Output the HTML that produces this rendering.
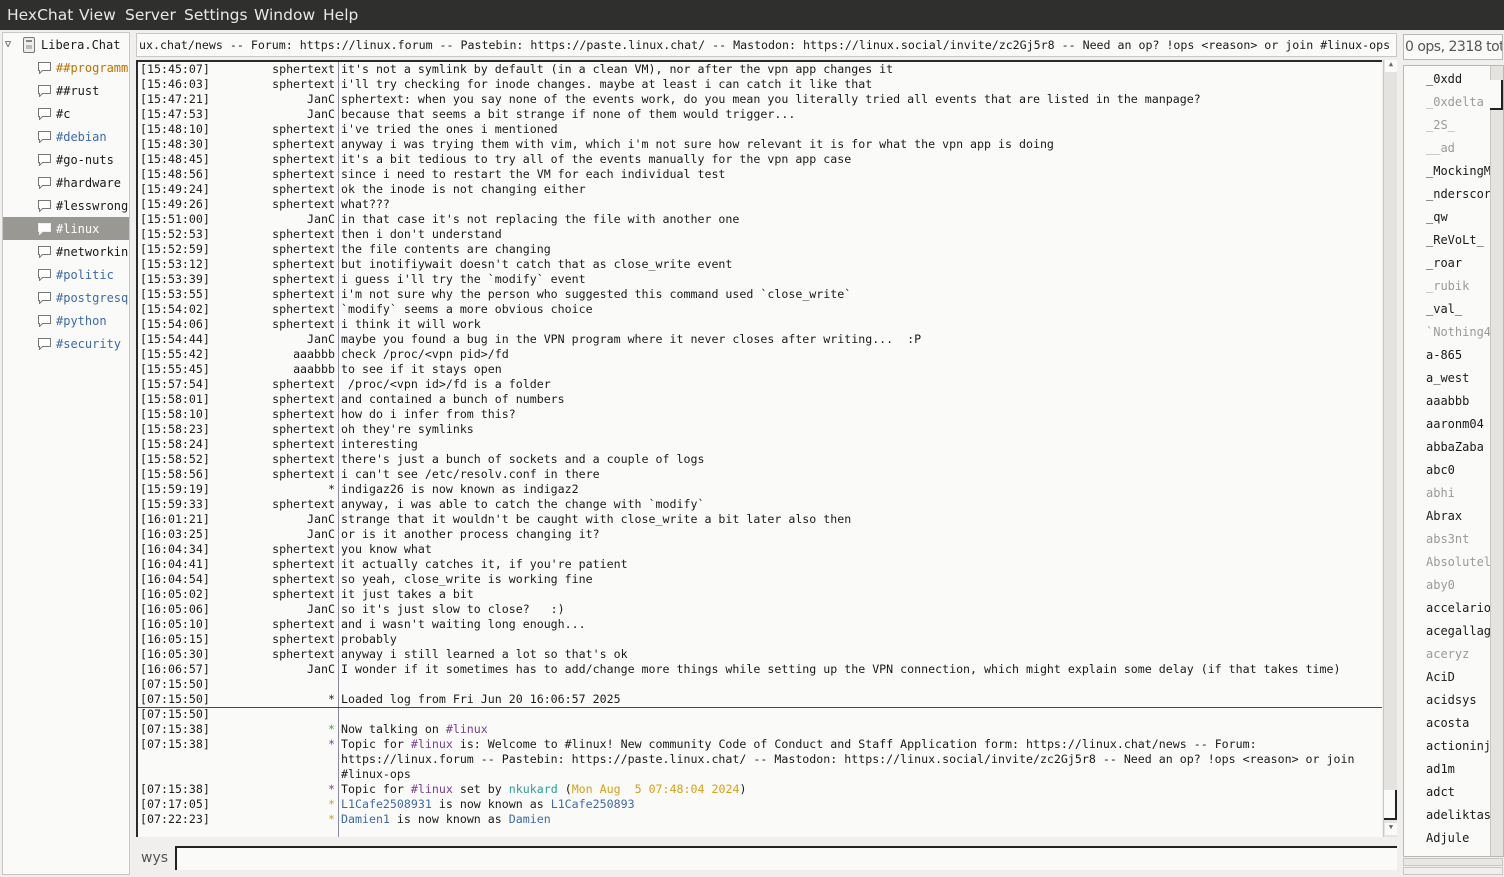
<!DOCTYPE html>
<html><head><meta charset="utf-8"><style>
*{margin:0;padding:0;box-sizing:border-box}
body{width:1504px;height:877px;background:#f0efed;font-family:"DejaVu Sans Mono","Liberation Mono",monospace;position:relative;overflow:hidden;color:#1a1a1a}
.menu{position:absolute;left:0;top:0;width:1504px;height:30px;background:#2f2f2e;color:#e8e8e6;font-family:"DejaVu Sans","Liberation Sans",sans-serif;font-size:15.5px}
.menu span{position:absolute;top:6px}
.tree{position:absolute;left:2px;top:32px;width:128px;height:843px;background:#fafaf8;border:1px solid #c8c7c4;font-size:12px;overflow:hidden}
.tree .it{position:absolute;left:0;width:126px;height:22px;line-height:22px;white-space:nowrap;overflow:hidden}
.ic{position:absolute;left:34px;top:4px;width:15px;height:13px}
.topic{position:absolute;left:136px;top:33px;width:1261px;height:24px;background:#fafaf8;border:1px solid #c8c7c4;font-size:11.62px;line-height:22px;white-space:nowrap;overflow:hidden;padding-left:2px}
.chat{position:absolute;left:136px;top:60px;width:1246px;height:777px;background:#fafaf8;border-left:2px solid #2a2a2a;border-top:2px solid #2a2a2a;overflow:hidden}
.vl{position:absolute;left:200px;top:0;width:1px;height:777px;background:#8b88a6}
.r{position:absolute;left:0;height:15px;line-height:15px;font-size:11.62px;white-space:pre;width:1244px}
.t{position:absolute;left:2px}
.n{position:absolute;right:1047px;text-align:right}
.m{position:absolute;left:203px}
.sep{position:absolute;left:0;top:645px;width:1244px;height:1px;background:#7a3b10}
.sb{position:absolute;left:1383px;top:60px;width:14px;height:777px;background:#e4e3e0;border-left:1px solid #c8c7c4}
.ulh{position:absolute;left:1403px;top:34px;width:100px;height:26px;border:1px solid #b8b7b4;background:#fafaf8;font-family:"DejaVu Sans","Liberation Sans",sans-serif;font-size:14px;color:#555;line-height:24px;white-space:nowrap;overflow:hidden;padding-left:1px;letter-spacing:-0.5px}
.ul{position:absolute;left:1403px;top:65px;width:101px;height:792px;border:1px solid #b8b7b4;background:#fafaf8;overflow:hidden;font-size:12px}
.ul div{position:absolute;left:22px;height:23px;line-height:25px;white-space:nowrap}
.g{color:#9a9a98}
.b{color:#3e6aa8}.p{color:#7a3d8f}.gr{color:#3aa83a}.o{color:#c07000}.y{color:#d4a017}.cy{color:#2aa198}
</style></head><body>
<div class="menu"><span style="left:7px">HexChat</span><span style="left:79px">View</span><span style="left:125px">Server</span><span style="left:184px">Settings</span><span style="left:254px">Window</span><span style="left:323px">Help</span></div>

<div class="tree">
<div class="it" style="top:1px"><span style="position:absolute;left:2px;top:0;font-size:10px;color:#333">&#9661;</span><svg style="position:absolute;left:19px;top:3px" width="14" height="16"><rect x="1.5" y="0.5" width="11" height="15" rx="1.5" fill="#eee" stroke="#777"/><rect x="4" y="3" width="6" height="2" fill="#888"/><rect x="4" y="8" width="6" height="4" fill="#bbb"/></svg><span style="position:absolute;left:38px">Libera.Chat</span></div>
<div class="it" style="top:24px"><svg class="ic"><path d="M1.5 1.5h12v8h-8l-3 3v-3h-1z" fill="#fff" stroke="#777"/></svg><span style="position:absolute;left:53px" class="o">##programming</span></div>
<div class="it" style="top:47px"><svg class="ic"><path d="M1.5 1.5h12v8h-8l-3 3v-3h-1z" fill="#fff" stroke="#777"/></svg><span style="position:absolute;left:53px">##rust</span></div>
<div class="it" style="top:70px"><svg class="ic"><path d="M1.5 1.5h12v8h-8l-3 3v-3h-1z" fill="#fff" stroke="#777"/></svg><span style="position:absolute;left:53px">#c</span></div>
<div class="it" style="top:93px"><svg class="ic"><path d="M1.5 1.5h12v8h-8l-3 3v-3h-1z" fill="#fff" stroke="#777"/></svg><span style="position:absolute;left:53px" class="b">#debian</span></div>
<div class="it" style="top:116px"><svg class="ic"><path d="M1.5 1.5h12v8h-8l-3 3v-3h-1z" fill="#fff" stroke="#777"/></svg><span style="position:absolute;left:53px">#go-nuts</span></div>
<div class="it" style="top:139px"><svg class="ic"><path d="M1.5 1.5h12v8h-8l-3 3v-3h-1z" fill="#fff" stroke="#777"/></svg><span style="position:absolute;left:53px">#hardware</span></div>
<div class="it" style="top:162px"><svg class="ic"><path d="M1.5 1.5h12v8h-8l-3 3v-3h-1z" fill="#fff" stroke="#777"/></svg><span style="position:absolute;left:53px">#lesswrong</span></div>
<div class="it" style="top:184px;height:23px;line-height:24px;background:#9a9893;color:#fff"><svg class="ic" style="top:5px"><path d="M1.5 1.5h12v8h-8l-3 3v-3h-1z" fill="#fff" stroke="#eee"/></svg><span style="position:absolute;left:53px">#linux</span></div>
<div class="it" style="top:208px"><svg class="ic"><path d="M1.5 1.5h12v8h-8l-3 3v-3h-1z" fill="#fff" stroke="#777"/></svg><span style="position:absolute;left:53px">#networking</span></div>
<div class="it" style="top:231px"><svg class="ic"><path d="M1.5 1.5h12v8h-8l-3 3v-3h-1z" fill="#fff" stroke="#777"/></svg><span style="position:absolute;left:53px" class="b">#politic</span></div>
<div class="it" style="top:254px"><svg class="ic"><path d="M1.5 1.5h12v8h-8l-3 3v-3h-1z" fill="#fff" stroke="#777"/></svg><span style="position:absolute;left:53px" class="b">#postgresql</span></div>
<div class="it" style="top:277px"><svg class="ic"><path d="M1.5 1.5h12v8h-8l-3 3v-3h-1z" fill="#fff" stroke="#777"/></svg><span style="position:absolute;left:53px" class="b">#python</span></div>
<div class="it" style="top:300px"><svg class="ic"><path d="M1.5 1.5h12v8h-8l-3 3v-3h-1z" fill="#fff" stroke="#777"/></svg><span style="position:absolute;left:53px" class="b">#security</span></div>
</div>

<div class="topic">ux.chat/news -- Forum: https://linux.forum -- Pastebin: https://paste.linux.chat/ -- Mastodon: https://linux.social/invite/zc2Gj5r8 -- Need an op? !ops &lt;reason&gt; or join #linux-ops</div>

<div class="chat">
<div class="vl"></div>
<div class="sep"></div>
<div class="r" style="top:0"><span class="t">[15:45:07]</span><span class="n">sphertext</span><span class="m">it's not a symlink by default (in a clean VM), nor after the vpn app changes it</span></div>
<div class="r" style="top:15px"><span class="t">[15:46:03]</span><span class="n">sphertext</span><span class="m">i'll try checking for inode changes. maybe at least i can catch it like that</span></div>
<div class="r" style="top:30px"><span class="t">[15:47:21]</span><span class="n">JanC</span><span class="m">sphertext: when you say none of the events work, do you mean you literally tried all events that are listed in the manpage?</span></div>
<div class="r" style="top:45px"><span class="t">[15:47:53]</span><span class="n">JanC</span><span class="m">because that seems a bit strange if none of them would trigger...</span></div>
<div class="r" style="top:60px"><span class="t">[15:48:10]</span><span class="n">sphertext</span><span class="m">i've tried the ones i mentioned</span></div>
<div class="r" style="top:75px"><span class="t">[15:48:30]</span><span class="n">sphertext</span><span class="m">anyway i was trying them with vim, which i'm not sure how relevant it is for what the vpn app is doing</span></div>
<div class="r" style="top:90px"><span class="t">[15:48:45]</span><span class="n">sphertext</span><span class="m">it's a bit tedious to try all of the events manually for the vpn app case</span></div>
<div class="r" style="top:105px"><span class="t">[15:48:56]</span><span class="n">sphertext</span><span class="m">since i need to restart the VM for each individual test</span></div>
<div class="r" style="top:120px"><span class="t">[15:49:24]</span><span class="n">sphertext</span><span class="m">ok the inode is not changing either</span></div>
<div class="r" style="top:135px"><span class="t">[15:49:26]</span><span class="n">sphertext</span><span class="m">what???</span></div>
<div class="r" style="top:150px"><span class="t">[15:51:00]</span><span class="n">JanC</span><span class="m">in that case it's not replacing the file with another one</span></div>
<div class="r" style="top:165px"><span class="t">[15:52:53]</span><span class="n">sphertext</span><span class="m">then i don't understand</span></div>
<div class="r" style="top:180px"><span class="t">[15:52:59]</span><span class="n">sphertext</span><span class="m">the file contents are changing</span></div>
<div class="r" style="top:195px"><span class="t">[15:53:12]</span><span class="n">sphertext</span><span class="m">but inotifiywait doesn't catch that as close_write event</span></div>
<div class="r" style="top:210px"><span class="t">[15:53:39]</span><span class="n">sphertext</span><span class="m">i guess i'll try the `modify` event</span></div>
<div class="r" style="top:225px"><span class="t">[15:53:55]</span><span class="n">sphertext</span><span class="m">i'm not sure why the person who suggested this command used `close_write`</span></div>
<div class="r" style="top:240px"><span class="t">[15:54:02]</span><span class="n">sphertext</span><span class="m">`modify` seems a more obvious choice</span></div>
<div class="r" style="top:255px"><span class="t">[15:54:06]</span><span class="n">sphertext</span><span class="m">i think it will work</span></div>
<div class="r" style="top:270px"><span class="t">[15:54:44]</span><span class="n">JanC</span><span class="m">maybe you found a bug in the VPN program where it never closes after writing...  :P</span></div>
<div class="r" style="top:285px"><span class="t">[15:55:42]</span><span class="n">aaabbb</span><span class="m">check /proc/&lt;vpn pid&gt;/fd</span></div>
<div class="r" style="top:300px"><span class="t">[15:55:45]</span><span class="n">aaabbb</span><span class="m">to see if it stays open</span></div>
<div class="r" style="top:315px"><span class="t">[15:57:54]</span><span class="n">sphertext</span><span class="m"> /proc/&lt;vpn id&gt;/fd is a folder</span></div>
<div class="r" style="top:330px"><span class="t">[15:58:01]</span><span class="n">sphertext</span><span class="m">and contained a bunch of numbers</span></div>
<div class="r" style="top:345px"><span class="t">[15:58:10]</span><span class="n">sphertext</span><span class="m">how do i infer from this?</span></div>
<div class="r" style="top:360px"><span class="t">[15:58:23]</span><span class="n">sphertext</span><span class="m">oh they're symlinks</span></div>
<div class="r" style="top:375px"><span class="t">[15:58:24]</span><span class="n">sphertext</span><span class="m">interesting</span></div>
<div class="r" style="top:390px"><span class="t">[15:58:52]</span><span class="n">sphertext</span><span class="m">there's just a bunch of sockets and a couple of logs</span></div>
<div class="r" style="top:405px"><span class="t">[15:58:56]</span><span class="n">sphertext</span><span class="m">i can't see /etc/resolv.conf in there</span></div>
<div class="r" style="top:420px"><span class="t">[15:59:19]</span><span class="n">*</span><span class="m">indigaz26 is now known as indigaz2</span></div>
<div class="r" style="top:435px"><span class="t">[15:59:33]</span><span class="n">sphertext</span><span class="m">anyway, i was able to catch the change with `modify`</span></div>
<div class="r" style="top:450px"><span class="t">[16:01:21]</span><span class="n">JanC</span><span class="m">strange that it wouldn't be caught with close_write a bit later also then</span></div>
<div class="r" style="top:465px"><span class="t">[16:03:25]</span><span class="n">JanC</span><span class="m">or is it another process changing it?</span></div>
<div class="r" style="top:480px"><span class="t">[16:04:34]</span><span class="n">sphertext</span><span class="m">you know what</span></div>
<div class="r" style="top:495px"><span class="t">[16:04:41]</span><span class="n">sphertext</span><span class="m">it actually catches it, if you're patient</span></div>
<div class="r" style="top:510px"><span class="t">[16:04:54]</span><span class="n">sphertext</span><span class="m">so yeah, close_write is working fine</span></div>
<div class="r" style="top:525px"><span class="t">[16:05:02]</span><span class="n">sphertext</span><span class="m">it just takes a bit</span></div>
<div class="r" style="top:540px"><span class="t">[16:05:06]</span><span class="n">JanC</span><span class="m">so it's just slow to close?   :)</span></div>
<div class="r" style="top:555px"><span class="t">[16:05:10]</span><span class="n">sphertext</span><span class="m">and i wasn't waiting long enough...</span></div>
<div class="r" style="top:570px"><span class="t">[16:05:15]</span><span class="n">sphertext</span><span class="m">probably</span></div>
<div class="r" style="top:585px"><span class="t">[16:05:30]</span><span class="n">sphertext</span><span class="m">anyway i still learned a lot so that's ok</span></div>
<div class="r" style="top:600px"><span class="t">[16:06:57]</span><span class="n">JanC</span><span class="m">I wonder if it sometimes has to add/change more things while setting up the VPN connection, which might explain some delay (if that takes time)</span></div>
<div class="r" style="top:615px"><span class="t">[07:15:50]</span></div>
<div class="r" style="top:630px"><span class="t">[07:15:50]</span><span class="n">*</span><span class="m">Loaded log from Fri Jun 20 16:06:57 2025</span></div>
<div class="r" style="top:645px"><span class="t">[07:15:50]</span></div>
<div class="r" style="top:660px"><span class="t">[07:15:38]</span><span class="n gr">*</span><span class="m">Now talking on <span class="p">#linux</span></span></div>
<div class="r" style="top:675px"><span class="t">[07:15:38]</span><span class="n p">*</span><span class="m">Topic for <span class="p">#linux</span> is: Welcome to #linux! New community Code of Conduct and Staff Application form: https://linux.chat/news -- Forum:</span></div>
<div class="r" style="top:690px"><span class="m">https://linux.forum -- Pastebin: https://paste.linux.chat/ -- Mastodon: https://linux.social/invite/zc2Gj5r8 -- Need an op? !ops &lt;reason&gt; or join</span></div>
<div class="r" style="top:705px"><span class="m">#linux-ops</span></div>
<div class="r" style="top:720px"><span class="t">[07:15:38]</span><span class="n p">*</span><span class="m">Topic for <span class="p">#linux</span> set by <span class="cy">nkukard</span> (<span class="y">Mon Aug  5 07:48:04 2024</span>)</span></div>
<div class="r" style="top:735px"><span class="t">[07:17:05]</span><span class="n y">*</span><span class="m"><span class="b">L1Cafe2508931</span> is now known as <span class="b">L1Cafe250893</span></span></div>
<div class="r" style="top:750px"><span class="t">[07:22:23]</span><span class="n y">*</span><span class="m"><span class="b">Damien1</span> is now known as <span class="b">Damien</span></span></div>
</div>
<div class="sb"><div style="position:absolute;left:1px;top:0;width:12px;height:12px;background:#fafaf8;font-size:7px;text-align:center;color:#666">&#9650;</div><div style="position:absolute;left:0;top:730px;width:13px;height:30px;background:#fafaf8;border-right:2px solid #222;border-bottom:2px solid #222"></div><div style="position:absolute;left:1px;top:763px;width:12px;height:12px;background:#fafaf8;font-size:7px;text-align:center;color:#666">&#9660;</div></div>

<div style="position:absolute;left:141px;top:850px;font-family:'DejaVu Sans','Liberation Sans',sans-serif;font-size:14px;color:#555">wys</div>
<div style="position:absolute;left:175px;top:846px;width:1222px;height:24px;background:#fafaf8;border-left:2px solid #222;border-top:2px solid #222"></div>

<div class="ulh">0 ops, 2318 total</div>
<div class="ul">
<div style="top:1px">_0xdd</div><div class="g" style="top:24px">_0xdelta</div><div class="g" style="top:47px">_2S_</div><div class="g" style="top:70px">__ad</div><div style="top:93px">_MockingM</div><div style="top:116px">_nderscor</div><div style="top:139px">_qw</div><div style="top:162px">_ReVoLt_</div><div style="top:185px">_roar</div><div class="g" style="top:208px">_rubik</div><div style="top:231px">_val_</div><div class="g" style="top:254px">`Nothing4</div><div style="top:277px">a-865</div><div style="top:300px">a_west</div><div style="top:323px">aaabbb</div><div style="top:346px">aaronm04</div><div style="top:369px">abbaZaba</div><div style="top:392px">abc0</div><div class="g" style="top:415px">abhi</div><div style="top:438px">Abrax</div><div class="g" style="top:461px">abs3nt</div><div class="g" style="top:484px">Absolutel</div><div class="g" style="top:507px">aby0</div><div style="top:530px">accelario</div><div style="top:553px">acegallag</div><div class="g" style="top:576px">aceryz</div><div style="top:599px">AciD</div><div style="top:622px">acidsys</div><div style="top:645px">acosta</div><div style="top:668px">actioninj</div><div style="top:691px">ad1m</div><div style="top:714px">adct</div><div style="top:737px">adeliktas</div><div style="top:760px">Adjule</div>
<div style="position:absolute;left:86px;top:0;width:13px;height:790px;background:#e4e3e0;border-left:1px solid #c8c7c4"></div>
<div style="position:absolute;left:86px;top:14px;width:13px;height:30px;background:#fafaf8;border-right:2px solid #222;border-bottom:2px solid #222"></div>
</div>
<div style="position:absolute;left:1403px;top:858px;width:100px;height:8px;border:1px solid #c8c7c4;background:#e8e7e4"></div>
<div style="position:absolute;left:1403px;top:867px;width:100px;height:8px;border:1px solid #c8c7c4;background:#f0efed"></div>
</body></html>
